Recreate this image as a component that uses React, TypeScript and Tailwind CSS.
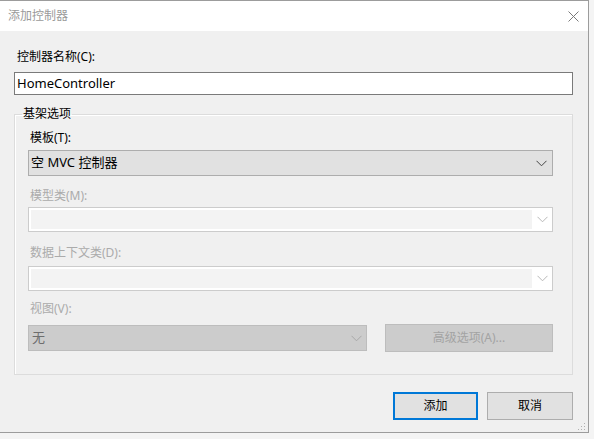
const font = { fontFamily: '"Noto Sans", "Noto Sans CJK SC", sans-serif' };

const Chevron = ({ color }: { color: string }) => (
  <svg width="11" height="7" viewBox="0 0 11 7" fill="none">
    <polyline points="0.5,0.8 5.5,5.8 10.5,0.8" stroke={color} strokeWidth="1" />
  </svg>
);

const DisabledSelect = () => (
  <div className="flex h-[25px] w-full border border-[#cccccc] bg-white">
    <div className="m-[2px] flex-1 bg-[#f3f3f3]" />
    <div className="flex w-[18px] items-center justify-center pr-[2px]">
      <Chevron color="#b8b8b8" />
    </div>
  </div>
);

const App = () => {
  return (
    <div className="h-[439px] w-[594px] bg-[#f4f4f4] text-[12px]" style={font}>
      <div className="flex h-[433px] w-[589px] flex-col border-t border-r border-b border-[#9c9c9c] bg-[#f0f0f0]">
        {/* Title bar */}
        <div className="flex h-[30px] items-center justify-between bg-white pl-[8px] pr-[9px]">
          <span className="leading-[16px] text-[#9a9a9a]">添加控制器</span>
          <svg width="11" height="11" viewBox="0 0 11 11">
            <path d="M0.5 0.5 L10.5 10.5 M10.5 0.5 L0.5 10.5" stroke="#7a7a7a" strokeWidth="1" />
          </svg>
        </div>

        {/* Body */}
        <div className="flex flex-1 flex-col pl-[14px] pr-[15px]">
          <div className="mt-[18px] pl-[3px] leading-[16px] text-black">控制器名称(C):</div>
          <div className="mt-[7px] flex h-[23px] items-center border border-[#7a7a7a] bg-white pl-[2px] text-[13px] text-black">
            HomeController
          </div>

          <fieldset className="mt-[11px] border border-[#dcdcdc] pl-[13px] pr-[19px] pb-[22px] shadow-[inset_1px_1px_0_#ffffff]">
            <legend className="-ml-[6px] px-[1px] leading-[16px] text-black">基架选项</legend>

            <div className="mt-[8px] pl-[2px] leading-[16px] text-black">模板(T):</div>
            <div className="mt-[4px] flex h-[26px] items-center justify-between border border-[#adadad] bg-[#e1e1e1] pl-[2px] pr-[5px] text-black">
              <span className="text-[13px]">空 MVC 控制器</span>
              <Chevron color="#444444" />
            </div>

            <div className="mt-[12px] pl-[2px] leading-[16px] text-[#ababab]">模型类(M):</div>
            <div className="mt-[3px]">
              <DisabledSelect />
            </div>

            <div className="mt-[13px] pl-[2px] leading-[16px] text-[#ababab]">数据上下文类(D):</div>
            <div className="mt-[5px]">
              <DisabledSelect />
            </div>

            <div className="mt-[10px] pl-[2px] leading-[16px] text-[#ababab]">视图(V):</div>
            <div className="mt-[7px] flex items-center gap-[18px]">
              <div className="flex h-[26px] w-[339px] items-center justify-between border border-[#bdbdbd] bg-[#cccccc] pl-[3px] pr-[4px] text-[#6d6d6d]">
                <span className="text-[13px]">无</span>
                <Chevron color="#a8a8a8" />
              </div>
              <div className="flex h-[28px] flex-1 items-center justify-center border border-[#bdbdbd] bg-[#cccccc] text-[#a3a3a3]">
                高级选项(A)...
              </div>
            </div>
          </fieldset>

          <div className="mt-[17px] flex justify-end gap-[9px]">
            <button className="flex h-[28px] w-[85px] items-center justify-center border-2 border-[#0078d7] bg-[#e1e1e1] text-black">
              添加
            </button>
            <button className="flex h-[28px] w-[86px] items-center justify-center border border-[#adadad] bg-[#e1e1e1] text-black">
              取消
            </button>
          </div>
          <div className="mt-auto flex justify-end pb-[1px]">
            <svg width="8" height="8" viewBox="0 0 8 8" className="mr-[-13px]">
              <rect x="6" y="0" width="1" height="1" fill="#b0b0b0" />
              <rect x="3" y="3" width="1" height="1" fill="#b0b0b0" />
              <rect x="6" y="3" width="1" height="1" fill="#b0b0b0" />
              <rect x="0" y="6" width="1" height="1" fill="#b0b0b0" />
              <rect x="3" y="6" width="1" height="1" fill="#b0b0b0" />
              <rect x="6" y="6" width="1" height="1" fill="#b0b0b0" />
            </svg>
          </div>
        </div>
      </div>
    </div>
  );
};

export default App;
